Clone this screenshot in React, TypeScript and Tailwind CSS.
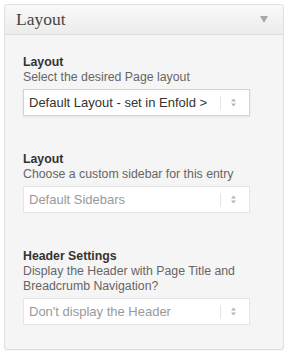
import React from 'react'

const sans = { fontFamily: '"Liberation Sans", Arial, sans-serif' }

function Arrows() {
  return (
    <svg width="7" height="9" viewBox="0 0 7 9" className="shrink-0">
      <path d="M3.5 0.5 L6 3.5 H1 Z" fill="#b5b5b5" />
      <path d="M3.5 8.5 L6 5.5 H1 Z" fill="#b5b5b5" />
    </svg>
  )
}

function FakeSelect({ value, active }: { value: string; active?: boolean }) {
  return (
    <div
      className={
        'flex items-center h-[27px] w-[227px] bg-white border pl-[5px] pr-[12px] ' +
        (active ? 'border-[#d4d4d4] shadow-[0_1px_2px_rgba(0,0,0,0.08)]' : 'border-[#e6e6e6]')
      }
    >
      <span className={'flex-1 text-[13px] whitespace-nowrap overflow-hidden ' + (active ? 'text-[#333]' : 'text-[#999]')}>
        {value}
      </span>
      <span className="w-px h-[14px] bg-[#e5e5e5] mr-[9px]" />
      <Arrows />
    </div>
  )
}

function Field({ label, desc, value, active }: { label: string; desc: React.ReactNode; value: string; active?: boolean }) {
  return (
    <div className="flex flex-col">
      <div className="text-[12.3px] font-bold leading-[16px] text-[#333]">{label}</div>
      <div className="text-[12.3px] leading-[15px] text-[#666] mb-[4px]">{desc}</div>
      <FakeSelect value={value} active={active} />
    </div>
  )
}

export default function App() {
  return (
    <div className="w-[290px] h-[354px] bg-white p-[4px] pr-[6px]" style={sans}>
      <div className="border border-[#dfdfdf] rounded-[3px] bg-[#f5f5f5] shadow-[0_1px_1px_rgba(0,0,0,0.04)]">
        <div className="h-[30px] flex items-center justify-between pl-[11px] pr-[15px] border-b border-[#dfdfdf] bg-gradient-to-b from-[#f9f9f9] to-[#ececec] rounded-t-[3px]">
          <span className="text-[17.5px] text-[#464646]" style={{ fontFamily: '"Liberation Serif", "Times New Roman", serif' }}>
            Layout
          </span>
          <svg width="8" height="7" viewBox="0 0 8 7">
            <path d="M0 0 H8 L4 7 Z" fill="#a8a8a8" />
          </svg>
        </div>
        <div className="flex flex-col gap-[35px] pl-[18px] pt-[19px] pb-[24px]">
          <Field label="Layout" desc="Select the desired Page layout" value="Default Layout - set in Enfold >" active />
          <Field label="Layout" desc="Choose a custom sidebar for this entry" value="Default Sidebars" />
          <Field
            label="Header Settings"
            desc={<>Display the Header with Page Title and<br />Breadcrumb Navigation?</>}
            value="Don't display the Header"
          />
        </div>
      </div>
    </div>
  )
}
